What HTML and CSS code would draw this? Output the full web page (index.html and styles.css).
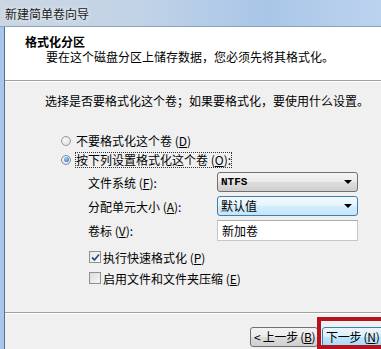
FILE: index.html
```html
<!DOCTYPE html>
<html lang="zh-CN">
<head>
<meta charset="utf-8">
<title>新建简单卷向导</title>
<link rel="stylesheet" href="styles.css">
</head>
<body>
<div class="screen">
  <div class="titlebar"><span class="title">新建简单卷向导</span></div>
  <div class="window">
    <div class="frame-left"></div>
    <div class="client">
      <div class="header">
        <div class="h-title">格式化分区</div>
        <div class="h-sub">要在这个磁盘分区上储存数据，您必须先将其格式化。</div>
      </div>
      <div class="body">
        <p class="intro">选择是否要格式化这个卷；如果要格式化，要使用什么设置。</p>
        <div class="radio-row">
          <span class="radio"></span>
          <span>不要格式化这个卷 (<u>D</u>)</span>
        </div>
        <div class="radio-row">
          <span class="radio on"><span class="dot"></span></span>
          <span class="focus">按下列设置格式化这个卷 (<u>O</u>):</span>
        </div>
        <div class="fields">
          <div class="field">
            <span class="label">文件系统 (<u>F</u>):</span>
            <div class="combo"><span class="val bold">NTFS</span><span class="arrow"></span></div>
          </div>
          <div class="field">
            <span class="label">分配单元大小 (<u>A</u>):</span>
            <div class="combo focused"><span class="val">默认值</span><span class="arrow"></span></div>
          </div>
          <div class="field">
            <span class="label">卷标 (<u>V</u>):</span>
            <div class="textbox">新加卷</div>
          </div>
        </div>
        <div class="checks">
          <div class="check-row">
            <span class="check on">
              <svg width="9" height="9" viewBox="0 0 9 9"><path d="M1 4.5 L3.5 7 L8 1.5" fill="none" stroke="#2a4f8f" stroke-width="1.8"/></svg>
            </span>
            <span>执行快速格式化 (<u>P</u>)</span>
          </div>
          <div class="check-row">
            <span class="check"></span>
            <span>启用文件和文件夹压缩 (<u>E</u>)</span>
          </div>
        </div>
      </div>
      <div class="footer">
        <button class="btn">&lt; 上一步 (<u>B</u>)</button>
        <div class="next-wrap">
          <button class="btn hot">下一步 (<u>N</u>) &gt;</button>
          <span class="highlight"></span>
        </div>
      </div>
    </div>
  </div>
</div>
</body>
</html>
```
FILE: styles.css
```css
html, body {
  margin: 0;
  padding: 0;
}
body {
  width: 381px;
  height: 349px;
  overflow: hidden;
  font-family: "Noto Sans CJK SC", "DejaVu Sans", sans-serif;
  font-size: 12px;
  color: #000;
  background: #a9c4e4;
}
u { text-decoration: underline; }
.screen {
  width: 381px;
  height: 349px;
  overflow: hidden;
  display: flex;
  flex-direction: column;
}
.titlebar {
  height: 27px;
  flex: none;
  box-sizing: border-box;
  padding: 5px 0 0 5px;
  background: linear-gradient(90deg, #cbd6e2 0%, #c2d3e6 35%, #a9c6e8 70%, #bcd3ee 100%);
  border-bottom: 1px solid #8da3bb;
}
.title {
  line-height: 16px;
  color: #1a1a1a;
  text-shadow: 0 0 4px #fff;
}
.window {
  flex: 1;
  display: flex;
  min-width: 0;
}
.frame-left {
  width: 4px;
  flex: none;
  background: #a7c6ec;
  border-right: 1px solid #5d6f84;
}
.client {
  flex: 1;
  min-width: 0;
  overflow: hidden;
  display: flex;
  flex-direction: column;
  background: #f0f0f0;
}
.header {
  height: 54px;
  flex: none;
  box-sizing: border-box;
  background: #fff;
  border-bottom: 1px solid #a0a0a0;
  padding: 7px 0 0 20px;
}
.h-title {
  font-weight: bold;
  line-height: 15px;
}
.h-sub {
  line-height: 15px;
  padding-left: 21px;
  white-space: nowrap;
}
.body {
  border-top: 1px solid #fff;
  padding: 11px 0 0 40px;
  height: 232px;
  flex: none;
  box-sizing: border-box;
  border-bottom: 1px solid #a0a0a0;
}
.intro {
  margin: 0 0 22px 0;
  line-height: 16px;
  white-space: nowrap;
}
.radio-row {
  display: flex;
  align-items: center;
  height: 19px;
  padding-left: 16px;
  gap: 5px;
}
.radio {
  width: 10px;
  height: 10px;
  border-radius: 50%;
  border: 1px solid #9a9a9a;
  background: radial-gradient(circle at 40% 40%, #fafafa, #d8d8d8);
  display: flex;
  align-items: center;
  justify-content: center;
  box-sizing: border-box;
}
.radio.on { border-color: #7a8ea6; }
.dot {
  width: 5px;
  height: 5px;
  border-radius: 50%;
  background: radial-gradient(circle at 40% 35%, #a6d3ff, #1d5eb8);
}
.focus {
  outline: 1px dotted #333;
  outline-offset: 0;
  line-height: 14px;
}
.fields {
  margin-top: 3px;
  display: flex;
  flex-direction: column;
  gap: 4px;
}
.field {
  display: flex;
  align-items: center;
  height: 20px;
  padding-left: 43px;
}
.label {
  width: 129px;
  flex: none;
}
.combo {
  width: 141px;
  height: 20px;
  box-sizing: border-box;
  border: 1px solid #707070;
  border-radius: 3px;
  background: linear-gradient(#f4f4f4, #ebebeb 50%, #dddddd 51%, #cfcfcf);
  display: flex;
  align-items: center;
  justify-content: space-between;
  padding: 0 5px 0 3px;
}
.combo.focused {
  border-color: #3c7fb1;
  background: linear-gradient(#f3faff, #e4f3fd 50%, #d4edfc 51%, #c4e5fa);
}
.val { line-height: 16px; }
.bold { font-weight: bold; font-family: "Liberation Mono", monospace; font-size: 11px; }
.arrow {
  width: 0;
  height: 0;
  border-left: 4px solid transparent;
  border-right: 4px solid transparent;
  border-top: 4px solid #000;
}
.textbox {
  width: 141px;
  height: 21px;
  box-sizing: border-box;
  border: 1px solid #c3c8d0;
  border-top-color: #abadb3;
  background: #fff;
  padding: 1px 0 0 4px;
  line-height: 17px;
}
.checks {
  margin-top: 9px;
  display: flex;
  flex-direction: column;
  gap: 5px;
}
.check-row {
  display: flex;
  align-items: center;
  height: 16px;
  padding-left: 44px;
  gap: 2px;
}
.check {
  width: 12px;
  height: 12px;
  box-sizing: border-box;
  border: 1px solid #8f8f8f;
  background: linear-gradient(135deg, #dcdcdc, #f6f6f6);
  display: flex;
  align-items: center;
  justify-content: center;
}
.check.on {
  background: linear-gradient(135deg, #e6e6e6, #ffffff);
}
.footer {
  flex: 1;
  border-top: 1px solid #fff;
  display: flex;
  align-items: flex-start;
  padding: 13px 0 0 245px;
  gap: 4px;
}
.btn {
  height: 20px;
  flex: none;
  box-sizing: border-box;
  border: 1px solid #707070;
  border-radius: 3px;
  background: linear-gradient(#f2f2f2, #ebebeb 50%, #dddddd 51%, #cfcfcf);
  font-family: "Noto Sans CJK SC", "DejaVu Sans", sans-serif;
  font-size: 12px;
  line-height: 16px;
  padding: 0 3px;
  color: #000;
  width: 68px;
  text-align: left;
  white-space: nowrap;
  letter-spacing: -0.3px;
}
.next-wrap {
  position: relative;
  flex: none;
}
.btn.hot {
  width: 75px;
  border-color: #3c7fb1;
  background: linear-gradient(#eaf6fd, #d9f0fc 50%, #bee6fd 51%, #a7d9f5);
}
.highlight {
  position: absolute;
  left: -5px;
  top: -10px;
  width: 90px;
  height: 32px;
  border: 4px solid #b4121c;
  box-sizing: border-box;
}
```
